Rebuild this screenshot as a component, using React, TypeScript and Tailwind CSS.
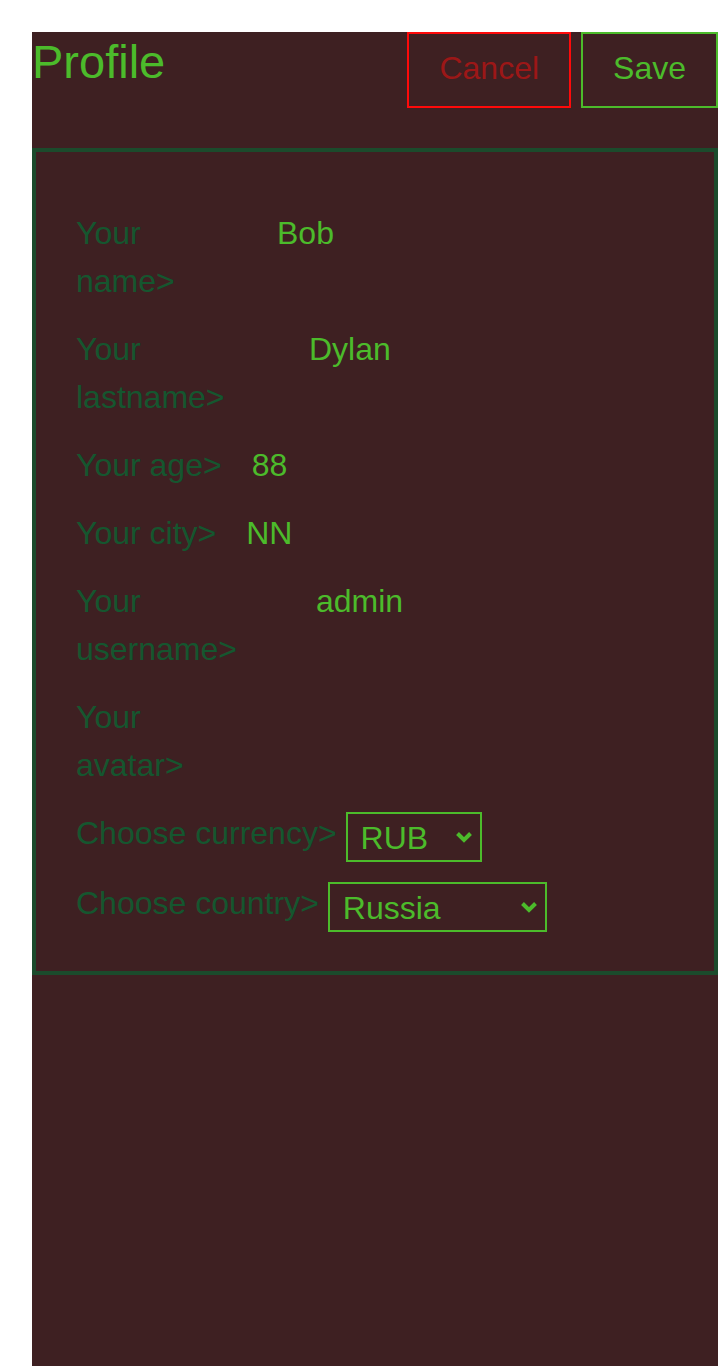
import React from "react";

const font = { fontFamily: '"Liberation Sans", Arial, sans-serif' };

type Field = { label: string; value?: string; labelW: string };

// label widths follow how the labels wrap in the design
const fields: Field[] = [
  { label: "Your name>", value: "Bob", labelW: "w-[171px]" },
  { label: "Your lastname>", value: "Dylan", labelW: "w-[203px]" },
  { label: "Your age>", value: "88", labelW: "w-auto" },
  { label: "Your city>", value: "NN", labelW: "w-auto" },
  { label: "Your username>", value: "admin", labelW: "w-[210px]" },
  { label: "Your avatar>", labelW: "w-[150px]" },
];

function Chevron() {
  return (
    <svg
      width="18"
      height="12"
      viewBox="0 0 18 12"
      className="pointer-events-none absolute right-[9px] top-1/2 -translate-y-1/2"
    >
      <path d="M2.5 2.5 L9 9 L15.5 2.5" fill="none" stroke="#4cbb2b" strokeWidth="4" />
    </svg>
  );
}

function Select({
  value,
  onChange,
  options,
  width,
}: {
  value: string;
  onChange: (v: string) => void;
  options: string[];
  width: string;
}) {
  return (
    <div className={`relative mt-[3px] ${width}`}>
      <select
        value={value}
        onChange={(e) => onChange(e.target.value)}
        className="h-[50px] w-full appearance-none border-2 border-[#4cbb2b] bg-transparent pb-[4px] pl-[13px] text-[#4cbb2b] outline-none"
      >
        {options.map((o) => (
          <option key={o} className="bg-[#3e2022]">
            {o}
          </option>
        ))}
      </select>
      <Chevron />
    </div>
  );
}

export default function App() {
  const [currency, setCurrency] = React.useState("RUB");
  const [country, setCountry] = React.useState("Russia");

  return (
    <div className="min-h-screen bg-white pl-8 pt-8" style={font}>
      <div className="min-h-[1334px] bg-[#3e2022]">
        {/* Header */}
        <div className="flex items-start justify-between">
          <h1 className="mt-[3px] text-[47px] leading-[54px] text-[#4cbb2b]">Profile</h1>
          <div className="flex gap-[10px]">
            <button className="h-[76px] border-2 border-[#ff0a0a] px-[30px] pb-[5px] text-[32px] text-[#9c1717]">
              Cancel
            </button>
            <button className="h-[76px] border-2 border-[#4cbb2b] px-[30px] pb-[5px] text-[32px] text-[#4cbb2b]">
              Save
            </button>
          </div>
        </div>

        {/* Form card */}
        <div className="mt-10 border-4 border-[#1b4b2c] px-10 pt-[57px] pb-[42px] text-[32px]">
          <div className="flex flex-col gap-5">
            {fields.map((f) => (
              <div key={f.label} className="flex items-start gap-[30px]">
                <label className={`${f.labelW} shrink-0 leading-[48px] text-[#15562f]`}>{f.label}</label>
                {f.value && (
                  <input
                    readOnly
                    value={f.value}
                    className="h-[48px] w-[220px] bg-transparent p-0 leading-[48px] text-[#4cbb2b] outline-none"
                  />
                )}
              </div>
            ))}

            <div className="flex h-[50px] items-start gap-[9px]">
              <label className="leading-[48px] text-[#15562f]">Choose currency&gt;</label>
              <Select value={currency} onChange={setCurrency} options={["RUB", "USD", "EUR"]} width="w-[136px]" />
            </div>

            <div className="flex h-[50px] items-start gap-[9px]">
              <label className="leading-[48px] text-[#15562f]">Choose country&gt;</label>
              <Select
                value={country}
                onChange={setCountry}
                options={["Russia", "Belarus", "Kazakhstan"]}
                width="w-[219px]"
              />
            </div>
          </div>
        </div>
      </div>
    </div>
  );
}
